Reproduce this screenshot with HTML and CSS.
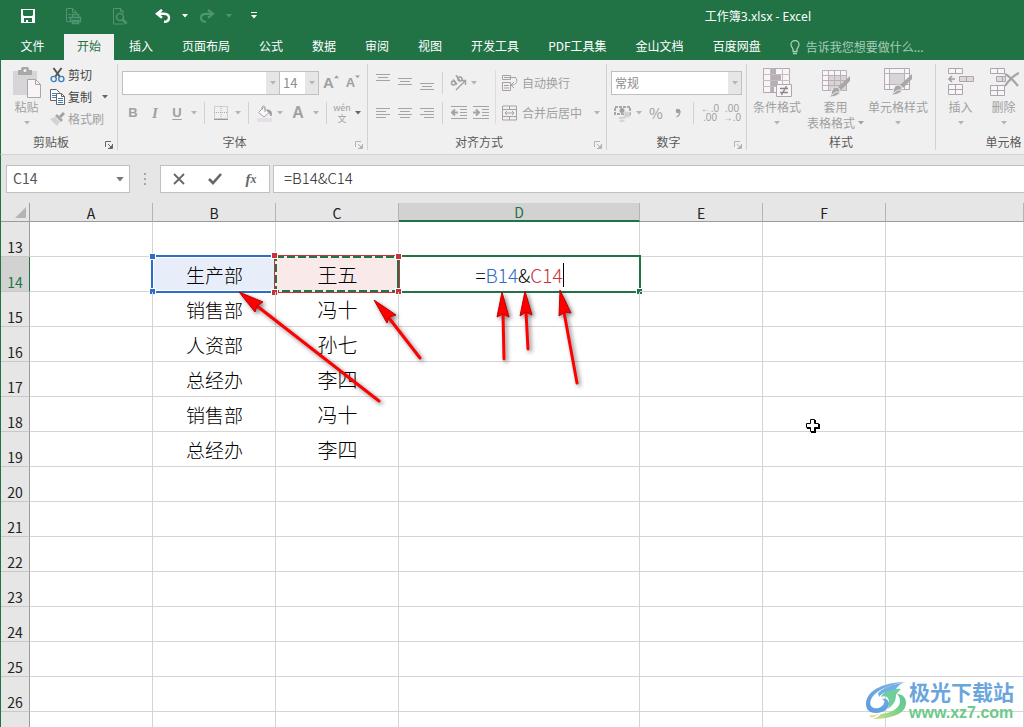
FILE: index.html
```html
<!DOCTYPE html>
<html lang="zh-CN">
<head>
<meta charset="utf-8">
<title>工作簿3.xlsx - Excel</title>
<link rel="stylesheet" href="styles.css">
</head>
<body>
<svg class="defs" aria-hidden="true">
  <symbol id="caret" viewBox="0 0 6 4"><path d="M0 0h6L3 3.5z" fill="currentColor"/></symbol>
  <symbol id="launch" viewBox="0 0 8 8"><path d="M.5 6V.5H6M3 3l3 3M7.500 3v4.500H3" fill="none" stroke="currentColor"/><path d="M7 4v3H4z" fill="currentColor"/></symbol>
  <symbol id="brush" viewBox="0 0 24 24"><path d="M22 1v5l-9 9-3-3z" fill="#a8a8a8"/><path d="M8 12c2 0 4 2 4 4 0 4-5 6-11 6 3-1 2-4 3-7 1-2 2-3 4-3z" fill="#a8a8a8" stroke="#f0f0f0"/><path d="M4 20c3-3 4-3 7-3" stroke="#eee" fill="none"/></symbol>
</svg>

<header class="titlebar">
  <nav class="quick" aria-label="快速访问工具栏">
    <button class="q w44" aria-label="保存"><svg width="16" height="16" viewBox="0 0 16 16"><path d="M1 1h14v14H1z" fill="#fff"/><path d="M3 2h10v5l-1 1H4L3 7zM4 10h8v4H4z" fill="#217346"/><path d="M6 12h2v2H6z" fill="#fff"/></svg></button>
    <button class="q w46 off" aria-label="打印" disabled><svg width="17" height="17" viewBox="0 0 17 17" fill="none" stroke="currentColor"><path d="M5 13.500H1.500v-13h6l4 4V6M7.500.5v4h4M3 6.500h3M3 9.500h2"/><path d="M7.500 9V6.500h6V9M5.500 9.500h10v4h-10zM7.500 12.500h6v3h-6z" stroke-width="1.500"/></svg></button>
    <button class="q w48 off" aria-label="打印预览" disabled><svg width="16" height="17" viewBox="0 0 16 17" fill="none" stroke="currentColor"><path d="M11.500 16H1.500V.5h7l3 3V5M8.500.5v3h3"/><circle cx="8" cy="9" r="3.500" stroke-width="1.500"/><path d="M10.500 11.500l4 4" stroke-width="2.500"/></svg></button>
    <button class="q w38" aria-label="撤消"><svg width="16" height="14" viewBox="0 0 16 14" fill="none" stroke="currentColor" stroke-width="2.400"><path d="M7 .8L2 4.800l5 4M2.500 4.800H9c4 0 5 2 5 4 0 3-2 4-5 4"/></svg></button>
    <svg class="ico-caret"><use href="#caret"/></svg>
    <button class="q w38 off" aria-label="恢复" disabled><svg width="16" height="14" viewBox="0 0 16 14" fill="none" stroke="currentColor" stroke-width="2.200"><path d="M9 .8l5 4-5 4M13.500 4.800H7c-4 0-5 2-5 4 0 3 2 4 5 4"/></svg></button>
    <svg class="ico-caret off"><use href="#caret"/></svg>
    <button class="q w44" aria-label="自定义快速访问工具栏"><svg width="6" height="8" viewBox="0 0 6 8"><path d="M0 .5h6" stroke="#fff"/><path d="M0 3h6L3 6.500z" fill="#fff"/></svg></button>
  </nav>
  <h1 class="title">工作簿3.xlsx - Excel</h1>
</header>

<nav class="tabs" aria-label="功能区">
  <button class="tab file">文件</button>
  <button class="tab active">开始</button>
  <button class="tab">插入</button>
  <button class="tab">页面布局</button>
  <button class="tab">公式</button>
  <button class="tab">数据</button>
  <button class="tab">审阅</button>
  <button class="tab">视图</button>
  <button class="tab">开发工具</button>
  <button class="tab">PDF工具集</button>
  <button class="tab">金山文档</button>
  <button class="tab">百度网盘</button>
  <button class="tell"><svg width="10" height="15" viewBox="0 0 10 15" fill="none" stroke="currentColor"><path d="M3 9.500C3 8 1 7 1 4.500a4 4 0 0 1 8 0C9 7 7 8 7 9.500v2H3z" stroke-width="1.300"/><path d="M3 13.500h4" stroke-width="1.500"/></svg>告诉我您想要做什么...</button>
</nav>

<div class="ribbon">
  <section class="group clipboard">
    <div class="body">
      <button class="big paste" disabled><svg width="30" height="32" viewBox="0 0 30 32"><path d="M1 4h24v24H1z" fill="#d8d5d8"/><path d="M6 3h3a3.500 3.500 0 0 1 8 0h3v5H6z" fill="#a8a8a8"/><circle cx="13" cy="3.500" r="1.500" fill="#f0f0f0"/><path d="M15.500 12.500h8l5 5v13h-13z" fill="#f8f4f8" stroke="#a8a8a8"/><path d="M23.500 12.500v5h5" fill="none" stroke="#a8a8a8"/></svg><span>粘贴</span><svg class="ico-caret"><use href="#caret"/></svg></button>
      <div class="stack">
        <button class="line"><svg width="16" height="16" viewBox="0 0 16 16" fill="none"><path d="M3.500 1l6.500 9M11.500 1L5 10" stroke="#555" stroke-width="2"/><circle cx="3.700" cy="12" r="2.600" stroke="#3f7fbf" stroke-width="1.400"/><circle cx="11.300" cy="12" r="2.600" stroke="#3f7fbf" stroke-width="1.400"/></svg>剪切</button>
        <button class="line"><svg width="16" height="16" viewBox="0 0 16 16"><path d="M.5.5h6l3 3v8h-9z" fill="#fff" stroke="#666"/><path d="M2 4.500h4M2 6.500h4M2 8.500h4" stroke="#3f7fbf"/><path d="M6.500 4.500h5l3 3v8h-8z" fill="#fff" stroke="#666"/><path d="M11.500 4.500v3h3" fill="none" stroke="#666"/><path d="M8 9.500h5M8 11.500h5M8 13.500h5" stroke="#3f7fbf"/></svg>复制<svg class="ico-caret after"><use href="#caret"/></svg></button>
        <button class="line" disabled><svg width="16" height="16" viewBox="0 0 16 16"><path d="M15 3l-4 4-2-2 4-4z" fill="#a0a0a0"/><path d="M7 3l6 6-2 2-6-6z" fill="#a8a8a8"/><path d="M5 6l5 5-3 4-7-7z" fill="#d5d2d5"/></svg>格式刷</button>
      </div>
    </div>
    <footer><span>剪贴板</span><svg class="ico-launch dark"><use href="#launch"/></svg></footer>
  </section>

  <section class="group font">
    <div class="body rows">
      <div class="row">
        <span class="combo name"><input aria-label="字体" disabled><i><svg class="ico-caret"><use href="#caret"/></svg></i></span><span class="combo size"><input aria-label="字号" value="14" disabled><i><svg class="ico-caret"><use href="#caret"/></svg></i></span>
        <button class="b w24 grow" aria-label="增大字号" disabled>A<svg class="sup" viewBox="0 0 6 4"><path d="M0 3.500h6L3 0z" fill="currentColor"/></svg></button>
        <button class="b w20 shrink" aria-label="减小字号" disabled>A<svg class="sup" viewBox="0 0 6 4"><use href="#caret"/></svg></button>
      </div>
      <div class="row">
        <button class="b w22 bold" disabled>B</button><button class="b w22 ital" disabled>I</button><button class="b w22 under" disabled>U</button><svg class="ico-caret cell"><use href="#caret"/></svg><i class="sep"></i>
        <button class="b w22" aria-label="边框" disabled><svg width="14" height="14" viewBox="0 0 14 14" fill="none" stroke="#b5a8b5" ><path d="M.5.5h13v12H.5zM7 0v13M0 6.500h14" stroke-dasharray="1 1"/><path d="M0 13.500h14" stroke="#999"/></svg></button><svg class="ico-caret cell"><use href="#caret"/></svg><i class="sep"></i>
        <button class="b w20" aria-label="填充颜色" disabled><svg width="17" height="17" viewBox="0 0 17 17" fill="none"><path d="M2.500 7.500l5-5 5.500 5-5 4.500z" fill="#faf6fa" stroke="#a8a8a8"/><path d="M6 5V2a2 2 0 0 1 3 0v5" stroke="#a0a0a0"/><path d="M11 5c4 0 5 2 4 6-1-2-1-3-4-6z" fill="#999" stroke="#999"/><path d="M1 13h15v4H1z" fill="#e6e0e6"/></svg></button><svg class="ico-caret cell"><use href="#caret"/></svg>
        <button class="b w24 fcol" aria-label="字体颜色" disabled>A</button><svg class="ico-caret cell"><use href="#caret"/></svg><i class="sep"></i>
        <button class="b w20 wen" aria-label="拼音" disabled><span>wén</span><span>文</span></button><svg class="ico-caret cell on"><use href="#caret"/></svg>
      </div>
    </div>
    <footer><span>字体</span><svg class="ico-launch"><use href="#launch"/></svg></footer>
  </section>

  <section class="group align">
    <div class="body">
      <div class="rows">
        <div class="row">
          <button class="b w22" aria-label="顶端对齐" disabled><svg class="ln" viewBox="0 0 14 18"><path d="M0 .5h14M2 3.500h10M0 6.500h14"/></svg></button><button class="b w22" aria-label="垂直居中" disabled><svg class="ln" viewBox="0 0 14 18"><path d="M0 4.500h14M2 7.500h10M0 10.500h14"/></svg></button><button class="b w22" aria-label="底端对齐" disabled><svg class="ln" viewBox="0 0 14 18"><path d="M0 9.500h14M2 12.500h10M0 15.500h14"/></svg></button><i class="sep"></i>
          <button class="b w20" aria-label="方向" disabled><svg width="17" height="16" viewBox="0 0 17 16" fill="none" stroke="#a0a0a0"><path d="M6 15L15 6M15.500 10V5.500H11" stroke-width="1.400"/><g stroke-width="1.500"><circle cx="3.500" cy="8" r="2"/><path d="M3 4.500l4 5M6 0l4 6"/><circle cx="10" cy="4" r="2"/></g></svg></button><svg class="ico-caret cell"><use href="#caret"/></svg>
        </div>
        <div class="row">
          <button class="b w22" aria-label="左对齐" disabled><svg class="ln" viewBox="0 0 14 18"><path d="M0 4.500h14M0 7.500h10M0 10.500h14M0 13.500h10"/></svg></button><button class="b w22" aria-label="居中" disabled><svg class="ln" viewBox="0 0 14 18"><path d="M0 4.500h14M2 7.500h10M0 10.500h14M2 13.500h10"/></svg></button><button class="b w22" aria-label="右对齐" disabled><svg class="ln" viewBox="0 0 14 18"><path d="M0 4.500h14M4 7.500h10M0 10.500h14M4 13.500h10"/></svg></button><i class="sep"></i>
          <button class="b w22" aria-label="减少缩进" disabled><svg class="ln wide" viewBox="0 0 16 18"><path d="M0 2.500h16M9 5.500h7M9 8.500h7M9 11.500h7M0 14.500h16"/><path d="M1 8.500h6M4 5.500l-3 3 3 3" stroke-width="2"/></svg></button><button class="b w22" aria-label="增加缩进" disabled><svg class="ln wide" viewBox="0 0 16 18"><path d="M0 2.500h16M9 5.500h7M9 8.500h7M9 11.500h7M0 14.500h16"/><path d="M0 8.500h6M3 5.500l3 3-3 3" stroke-width="2"/></svg></button>
        </div>
      </div>
      <i class="sep tall"></i>
      <div class="rows">
        <button class="wide-b" disabled><svg width="16" height="16" viewBox="0 0 16 16" fill="none" stroke="#a89fa8"><path d="M.5.5h8v4h-8zM.5 7.500h8v8h-8zM2 2.500h12M2 10.500h5M2 13h5M14 3c2 3 0 7-4 7M12 7l-3 3 3 3"/></svg>自动换行</button>
        <button class="wide-b" disabled><svg width="16" height="16" viewBox="0 0 16 16" fill="none" stroke="#a89fa8"><path d="M.5 1h14v14H.5zM.5 4.500h14M.5 11.500h14M7.500 1v3.500M7.500 11.500V15"/><path d="M3 8h9M5 6L3 8l2 2M10 6l2 2-2 2"/></svg>合并后居中<svg class="ico-caret after"><use href="#caret"/></svg></button>
      </div>
    </div>
    <footer><span>对齐方式</span><svg class="ico-launch"><use href="#launch"/></svg></footer>
  </section>

  <section class="group number">
    <div class="body rows">
      <div class="row"><span class="combo fmt"><select aria-label="数字格式" disabled><option>常规</option></select><i><svg class="ico-caret"><use href="#caret"/></svg></i></span></div>
      <div class="row">
        <button class="b w22" aria-label="会计数字格式" disabled><svg width="17" height="17" viewBox="0 0 17 17"><path d="M1 2h15v7H1z" fill="#f4eef4" stroke="#a8a8a8" stroke-width="2" stroke-dasharray="3 1"/><circle cx="8" cy="5.500" r="2.500" fill="#a0a0a0"/><g fill="#d8d2d8"><ellipse cx="13" cy="8" rx="3.500" ry="1.500"/><ellipse cx="13" cy="11" rx="3.500" ry="1.500"/><ellipse cx="8" cy="13" rx="3.500" ry="1.300"/><ellipse cx="8" cy="16" rx="3" ry="1"/></g></svg></button><svg class="ico-caret cell"><use href="#caret"/></svg>
        <button class="b w22 pct" disabled>%</button><button class="b w22" aria-label="千位分隔样式" disabled><svg width="6" height="10" viewBox="0 0 6 10"><circle cx="3" cy="3" r="2.300" fill="#a0a0a0"/><path d="M5 3c0 3-1 5-3.500 6" stroke="#a0a0a0" fill="none" stroke-width="1.300"/></svg></button><i class="sep"></i>
        <button class="b w22 dec" aria-label="增加小数位数" disabled><span>←.0</span><span>.00</span></button><button class="b w22 dec" aria-label="减少小数位数" disabled><span>.00</span><span>→.0</span></button>
      </div>
    </div>
    <footer><span>数字</span><svg class="ico-launch"><use href="#launch"/></svg></footer>
  </section>

  <section class="group styles">
    <div class="body">
      <button class="big" disabled><svg width="30" height="32" viewBox="0 0 30 32"><path d="M1.500 1.500h26v24h-26z" fill="#f8f4f8" stroke="#b0aab0"/><path d="M8 1h6v6H8zM8 7h11v6H8zM8 13h8v6H8zM8 19h4v6H8z" fill="#b4b0b4"/><path d="M1 7.500h27M1 13.500h27M1 19.500h27M8.500 1v24M20.500 1v24" stroke="#c4bec4" fill="none"/><path d="M14.500 17.500h15v12h-15z" fill="#f8f4f8" stroke="#aaa"/><path d="M18 21.500h8M18 25.500h8M24.500 19l-5 9" stroke="#888" fill="none" stroke-width="1.400"/></svg><span>条件格式</span><svg class="ico-caret"><use href="#caret"/></svg></button>
      <button class="big two" disabled><svg width="30" height="32" viewBox="0 0 30 32"><path d="M1.500 3.500h24v20h-24z" fill="#f8f4f8"/><path d="M8 9h18v15H8z" fill="#d8d4d8"/><path d="M1.500 3.500h24v20h-24zM1 8.500h24M1 13.500h24M1 18.500h24M7.500 3v20M13.500 3v20M19.500 3v20" fill="none" stroke="#b8b2b8"/><use href="#brush" x="7" y="8" width="24" height="24"/></svg><span>套用</span><span class="drop">表格格式<svg class="ico-caret"><use href="#caret"/></svg></span></button>
      <button class="big" disabled><svg width="30" height="32" viewBox="0 0 30 32"><path d="M1.500 1.500h25v21h-25z" fill="#f8f4f8" stroke="#b0aab0"/><path d="M6.500 6.500h15v11h-15z" fill="#d8d4d8"/><path d="M6.500 1v21M21.500 1v21M1 6.500h25M1 17.500h25" fill="none" stroke="#b8b2b8"/><use href="#brush" x="7" y="6" width="24" height="24"/></svg><span>单元格样式</span><svg class="ico-caret"><use href="#caret"/></svg></button>
    </div>
    <footer><span>样式</span></footer>
  </section>

  <section class="group cells">
    <div class="body">
      <button class="big" disabled><svg width="28" height="32" viewBox="0 0 28 32" fill="#f8f4f8" stroke="#aca6ac"><path d="M1.500 1.500h14v5h-14zM8.500 1.500v5M1.500 17.500h14v10h-14zM8.500 17.500v10M1.500 22.500h14"/><path d="M12.500 9.500h14v5h-14zM19.500 9.500v5" fill="#dcd8dc"/><path d="M2 12h6M5 9l-3 3 3 3" fill="none" stroke="#a0a0a0" stroke-width="1.600"/></svg><span>插入</span><svg class="ico-caret"><use href="#caret"/></svg></button>
      <button class="big" disabled><svg width="30" height="32" viewBox="0 0 30 32" fill="#f8f4f8" stroke="#aca6ac"><path d="M1.500 1.500h14v5h-14zM8.500 1.500v5M1.500 18.500h14v10h-14zM8.500 18.500v10M1.500 23.500h14"/><path d="M7.500 9.500h9v5h-9zM13.500 9.500v5" fill="#dcd8dc"/><path d="M16 7c4 2 9 7 13 12M30 6c-5 2-10 7-14 13" fill="none" stroke="#a4a4a4" stroke-width="2.200"/></svg><span>删除</span><svg class="ico-caret"><use href="#caret"/></svg></button>
    </div>
    <footer><span>单元格</span></footer>
  </section>
</div>

<div class="formula">
  <span class="namebox"><input aria-label="名称框" value="C14"><svg class="ico-caret"><use href="#caret"/></svg></span>
  <svg class="dots" width="2" height="12" viewBox="0 0 2 12"><path d="M0 0h2v2H0zM0 5h2v2H0zM0 10h2v2H0z" fill="#a8a8a8"/></svg>
  <div class="fx">
    <button aria-label="取消"><svg width="12" height="12" viewBox="0 0 12 12"><path d="M1 1l10 10M11 1L1 11" stroke="#666" stroke-width="1.800"/></svg></button>
    <button aria-label="输入"><svg width="14" height="12" viewBox="0 0 14 12"><path d="M1 6l4 4 8-9" fill="none" stroke="#666" stroke-width="2.600"/></svg></button>
    <button class="fn" aria-label="插入函数">f<sub>x</sub></button>
  </div>
  <input class="fbar" aria-label="编辑栏" value="=B14&amp;C14">
</div>

<main class="sheet">
  <table>
    <colgroup><col class="rh"><col class="c"><col class="c"><col class="c"><col class="cd"><col class="c"><col class="c"><col></colgroup>
    <thead><tr><th class="corner"><svg width="11" height="11" viewBox="0 0 11 11"><path d="M11 0v11H0z" fill="#b4b4b4"/></svg></th><th>A</th><th>B</th><th>C</th><th class="sel">D</th><th>E</th><th>F</th><th></th></tr></thead>
    <tbody>
      <tr><th>13</th><td></td><td></td><td></td><td></td><td></td><td></td><td></td></tr>
      <tr><th class="sel">14</th><td></td>
        <td class="hi"><div class="range blue"><i class="h tl"></i><i class="h bl"></i></div><span>生产部</span></td>
        <td class="hi name"><div class="range red"><svg class="ants"><rect/></svg><i class="h tl r"></i><i class="h bl r"></i></div><span>王五</span></td>
        <td class="hi edit"><div class="range green"><i class="h tl r"></i><i class="h bl r"></i><i class="h br"></i></div><span>=<b class="r1">B14</b>&amp;<b class="r2">C14</b></span></td>
        <td></td><td></td><td></td></tr>
      <tr><th>15</th><td></td><td>销售部</td><td class="name">冯十</td><td></td><td></td><td></td><td></td></tr>
      <tr><th>16</th><td></td><td>人资部</td><td class="name">孙七</td><td></td><td></td><td></td><td></td></tr>
      <tr><th>17</th><td></td><td>总经办</td><td class="name">李四</td><td></td><td></td><td></td><td></td></tr>
      <tr><th>18</th><td></td><td>销售部</td><td class="name">冯十</td><td></td><td></td><td></td><td></td></tr>
      <tr><th>19</th><td></td><td>总经办</td><td class="name">李四</td><td></td><td></td><td></td><td></td></tr>
      <tr><th>20</th><td></td><td></td><td></td><td></td><td></td><td></td><td></td></tr>
      <tr><th>21</th><td></td><td></td><td></td><td></td><td></td><td></td><td></td></tr>
      <tr><th>22</th><td></td><td></td><td></td><td></td><td></td><td></td><td></td></tr>
      <tr><th>23</th><td></td><td></td><td></td><td></td><td></td><td></td><td></td></tr>
      <tr><th>24</th><td></td><td></td><td></td><td></td><td></td><td></td><td></td></tr>
      <tr><th>25</th><td></td><td></td><td></td><td></td><td></td><td></td><td></td></tr>
      <tr><th>26</th><td></td><td></td><td></td><td></td><td></td><td></td><td></td></tr>
      <tr><th></th><td></td><td></td><td></td><td></td><td></td><td></td><td></td></tr>
    </tbody>
  </table>

  <svg class="arrows" viewBox="230 280 370 140" width="370" height="140" aria-hidden="true">
    <g stroke="#f00" stroke-width="3" stroke-linecap="round">
      <path d="M257 306L379 401M389 318L420 358M503 312L504 359M526 312L528 349M564 312L577 383"/>
    </g>
    <g fill="#f00" stroke="#c00000" stroke-width="1">
      <path d="M239 292l24 10-6 4-2 6zM374 300l22 15-7 2-2 6zM502 292l7 25-6-3-6 3zM525 291l7 24-6-3-6 4zM560 290l11 23-6-1-6 4z"/>
    </g>
  </svg>

  <svg class="cursor" width="16" height="16" viewBox="0 0 16 16" aria-hidden="true"><path d="M6 2h5v4h4v5h-4v4H6v-4H2V6h4z" fill="#000"/><path d="M5.500 1.500h4v4h4v4h-4v4h-4v-4h-4v-4h4z" fill="#fff" stroke="#000"/></svg>

  <div class="mark">
    <svg width="42" height="40" viewBox="0 0 42 40" aria-hidden="true">
      <defs><linearGradient id="gb" x1="0" y1="1" x2="1" y2="0"><stop offset="0" stop-color="#5b9be0"/><stop offset="1" stop-color="#7fb4e6"/></linearGradient><linearGradient id="gg" x1="0" y1="1" x2="1" y2="0"><stop offset="0" stop-color="#d6e08a"/><stop offset=".6" stop-color="#6fcf8a"/><stop offset="1" stop-color="#5cc6a0"/></linearGradient></defs>
      <path d="M41 1C22 1 1 8 1 23c0 6 4 9 10 9 7 0 13-4 13-9 0-4-3-6-7-5 2 1 3 2 2 4-1 4-6 6-10 5-5-1-5-8 0-13C16 7 27 3 41 1z" fill="url(#gb)"/>
      <path d="M32 13c6 0 9 4 9 9 0 10-13 16-34 16 4-1 6-2 9-5 10-1 18-5 19-12 0-4-1-6-3-8z" fill="url(#gg)"/>
      <path d="M16 16c3-7 12-9 20-8-2 2-4 4-5 6 0 7-4 11-8 14 2-6 1-10-1-12-2-1-4-1-6 0z" fill="#6fcf9a"/>
      <path d="M13 12c6-6 15-9 25-10-4 2-6 4-8 7-6 0-12 2-16 7z" fill="#74aee6"/>
      <path d="M5 34c-1 2 1 3 4 2l5-3c-3 1-6 1-9 1z" fill="#e8dc9a"/>
    </svg>
    <div><strong>极光下载站</strong><em>www.xz7.com</em></div>
  </div>
</main>
</body>
</html>
```

FILE: styles.css
```css
* { box-sizing: border-box; }
body {
  margin: 0;
  height: 100vh;
  display: flex;
  flex-direction: column;
  overflow: hidden;
  background: #fff;
  font: 12px/16px "Noto Sans CJK SC", "Noto Sans", sans-serif;
  color: #444;
}
button, input, select { font: inherit; color: inherit; margin: 0; padding: 0; border: 0; background: none; }
button { display: flex; align-items: center; justify-content: center; }
svg { display: block; flex: none; }
i { font-style: normal; }
.defs { position: absolute; width: 0; height: 0; }
.ico-caret { width: 6px; height: 4px; }
.ico-caret.cell { margin: 0 3px; color: #b4b4b4; }
.ico-caret.cell.on { color: #666; }
.w20 { width: 20px; } .w22 { width: 22px; } .w24 { width: 24px; }
.w38 { width: 38px; } .w44 { width: 44px; } .w46 { width: 46px; } .w48 { width: 48px; }

.titlebar { flex: none; height: 34px; display: flex; align-items: center; justify-content: space-between; background: #217346; color: #fff; padding: 0 213px 2px 6px; }
.quick { display: flex; align-items: center; }
.q { height: 24px; flex: none; }
.off, .off:disabled { color: #4f9570; }
.title { margin: 0; font-family: "Noto Sans", "Noto Sans CJK SC", sans-serif; font-size: 12px; font-weight: 400; padding-top: 2px; }

.tabs { flex: none; height: 26px; display: flex; gap: 1px; background: #217346; color: #fff; white-space: nowrap; }
.tab { padding: 0 14px 3px; flex: none; height: 26px; }
.tab.file { width: 63px; padding-left: 16px; }
.tab.active { background: #f0f0f0; color: #217346; padding: 0 13px 3px; }
.tell { padding: 0 14px; gap: 6px; color: #a6cdb7; }

.ribbon { flex: none; height: 95px; display: flex; overflow: hidden; background: #f0f0f0; border-bottom: 1px solid #d2d2d2; border-left: 1px solid #217346; padding: 4px 0; }
.group { flex: none; display: flex; flex-direction: column; border-right: 1px solid #d2d2d2; }
.group .body { flex: 1; display: flex; }
.group footer { height: 16px; display: flex; color: #5a5a5a; text-align: center; }
.group footer span { flex: 1; line-height: 16px; }
.ico-launch { width: 8px; height: 8px; margin: 7px 4px 0; color: #b4b4b4; }
.ico-launch.dark { color: #666; }
button:disabled { color: #a0a0a0; }
.clipboard { width: 117px; }
.font { width: 250px; }
.align { width: 239px; }
.number { width: 140px; }
.styles { width: 189px; }
.cells { width: 136px; }

.big { flex: none; flex-direction: column; justify-content: flex-start; width: 60px; padding-top: 3px; white-space: nowrap; height: 70px; }
.big span { line-height: 16px; }
.big > .ico-caret { margin-top: 6px; color: #b4b4b4; }
.big.two { width: 57px; }
.big .drop { display: flex; align-items: center; gap: 3px; }
.styles .big:last-child { width: 68px; }
.cells .big { width: 43px; }
.cells .body { padding-left: 3px; }
.paste { width: 46px; padding-left: 5px; }

.stack { display: flex; flex-direction: column; }
.line { height: 22px; justify-content: flex-start; gap: 2px; padding-left: 3px; }
.after { margin-left: 8px; color: #666; }
.wide-b .after { color: #b4b4b4; }

.group .rows { display: flex; flex-direction: column; gap: 6px; padding-top: 7px; }
.row { display: flex; align-items: center; height: 24px; }
.font .body { padding-left: 4px; }
.align .body, .number .body { padding-left: 4px; }
.b { height: 22px; flex: none; }
.ln { width: 14px; height: 18px; fill: none; stroke: #a4a4a4; }
.ln.wide { width: 16px; }
.sep { flex: none; width: 1px; height: 22px; margin: 0 5px 0 4px; background: #d2d2d2; }
.sep.tall { height: 54px; margin: 6px 6px 0 3px; background: #dcdcdc; }
.combo { display: flex; height: 24px; flex: none; border: 1px solid #c0c0c0; background: #fff; }
.combo input, .combo select { flex: 1; min-width: 0; width: 0; padding-left: 3px; color: #8c8c8c; appearance: none; opacity: 1; }
.combo i { width: 13px; background: #e6e6e6; color: #b4b4b4; display: flex; align-items: center; justify-content: center; }
.combo.name { width: 158px; }
.combo.size { width: 40px; margin-left: -1px; font-size: 13px; }
.combo.fmt { width: 131px; }
.grow, .shrink { font: 700 15px/20px "Liberation Sans", sans-serif; align-items: center; }
.shrink { font-size: 13px; }
.sup { width: 5px; height: 4px; align-self: flex-start; margin-top: 3px; }
.bold, .ital, .under, .fcol { font: 700 13px/18px "Liberation Sans", sans-serif; }
.ital { font-family: "Liberation Serif", serif; font-style: italic; font-size: 15px; }
.under { text-decoration: underline; text-underline-offset: 2px; }
.fcol { font-size: 16px; }
.wen, .dec { flex-direction: column; }
.wen { font-size: 9px; line-height: 11px; }
.dec { font: 10px/9px "Liberation Sans", sans-serif; }
.pct { font-size: 15px; }
.wide-b { height: 24px; gap: 4px; justify-content: flex-start; }

.formula { flex: none; height: 48px; display: flex; align-items: center; background: #e6e6e6; border-left: 1px solid #217346; padding-left: 5px; color: #555; font-size: 15px; }
.namebox, .fx, .fbar { height: 28px; background: #fff; border: 1px solid #c0c0c0; }
.namebox { width: 124px; display: flex; align-items: center; padding: 0 5px; color: #555; font-size: 14px; }
.namebox input { flex: 1; min-width: 0; padding: 0 0 2px 1px; }
.dots { margin: 0 14px; }
.namebox .ico-caret { width: 8px; height: 5px; color: #777; }
.fx { width: 110px; display: flex; align-items: center; }
.fx button { width: 36px; height: 26px; }
.fn { font: italic 700 15px/20px "Liberation Serif", serif; color: #666; }
.fn sub { font-size: 12px; line-height: 12px; }
.fbar { flex: 1; min-width: 0; margin-left: 3px; padding: 0 0 3px 10px; font-size: 15px; font-weight: 300; border-right: 0; color: #222; }

.sheet { flex: 1; min-height: 0; position: relative; overflow: hidden; border-left: 1px solid #217346; }
table { width: 100%; table-layout: fixed; border-collapse: separate; border-spacing: 0; }
.rh { width: 29px; } .c { width: 123px; } .cd { width: 241px; }
th { background: #e6e6e6; font-weight: 400; font-size: 14px; color: #222; padding: 0; }
thead th { height: 19px; line-height: 16px; padding-top: 1px; border-bottom: 1px solid #9b9b9b; border-right: 1px solid #b4b4b4; }
thead th.sel { background: #d2d2d2; color: #217346; border-bottom: 2px solid #217346; }
thead th.corner { border-right-color: #9b9b9b; }
.corner svg { margin: 0 0 0 14px; }
tbody th { height: 35px; vertical-align: bottom; line-height: 17px; border-right: 1px solid #9b9b9b; border-bottom: 1px solid #c8c8c8; }
tbody th.sel { background: #d2d2d2; color: #217346; border-right-color: #217346; }
td { position: relative; height: 35px; padding: 2px 0 0 1px; border-right: 1px solid #d4d4d4; border-bottom: 1px solid #d4d4d4; text-align: center; font-size: 19px; line-height: 28px; font-weight: 300; color: #000; }
td.name { font-size: 20px; }
.hi > span { position: relative; display: inline-block; }
.range { position: absolute; inset: -2px; border: 2px solid; }
.blue { border-color: #2e6cc9; background: #e8eef9; box-shadow: inset 0 0 0 1px #fff; }
.red { border: 1px solid #c8323c; background: #f9e9e9; }
.green { border-color: #217346; }
.ants { width: 100%; height: 100%; position: absolute; inset: 0; }
.ants rect { width: calc(100% - 2px); height: calc(100% - 2px); x: 1px; y: 1px; fill: none; stroke: #217346; stroke-width: 2; stroke-dasharray: 8 3; }
.h { position: absolute; width: 7px; height: 7px; border: 1px solid #fff; background: #2e6cc9; }
.tl { left: -4px; top: -4px; }
.bl { left: -4px; bottom: -4px; }
.br { right: -4px; bottom: -4px; background: #217346; }
.h.r { background: #c8323c; }
.edit > span { border-right: 1px solid #000; line-height: 24px; }
.edit b { font-weight: 300; }
.r1 { color: #2e6cc9; }
.r2 { color: #c8323c; }

.arrows { position: absolute; left: 229px; top: 77px; filter: drop-shadow(2px 2px 2px rgba(0, 0, 0, .5)); }
.cursor { position: absolute; left: 804px; top: 215px; }
.mark { position: absolute; right: 10px; bottom: 4px; display: flex; align-items: center; gap: 2px; }
.mark strong, .mark em { display: block; font-style: normal; }
.mark strong { font-size: 21px; line-height: 24px; font-weight: 700; color: #6aa6dc; }
.mark em { font: 700 16px/20px "Liberation Sans", sans-serif; color: #6cc98a; }
```
